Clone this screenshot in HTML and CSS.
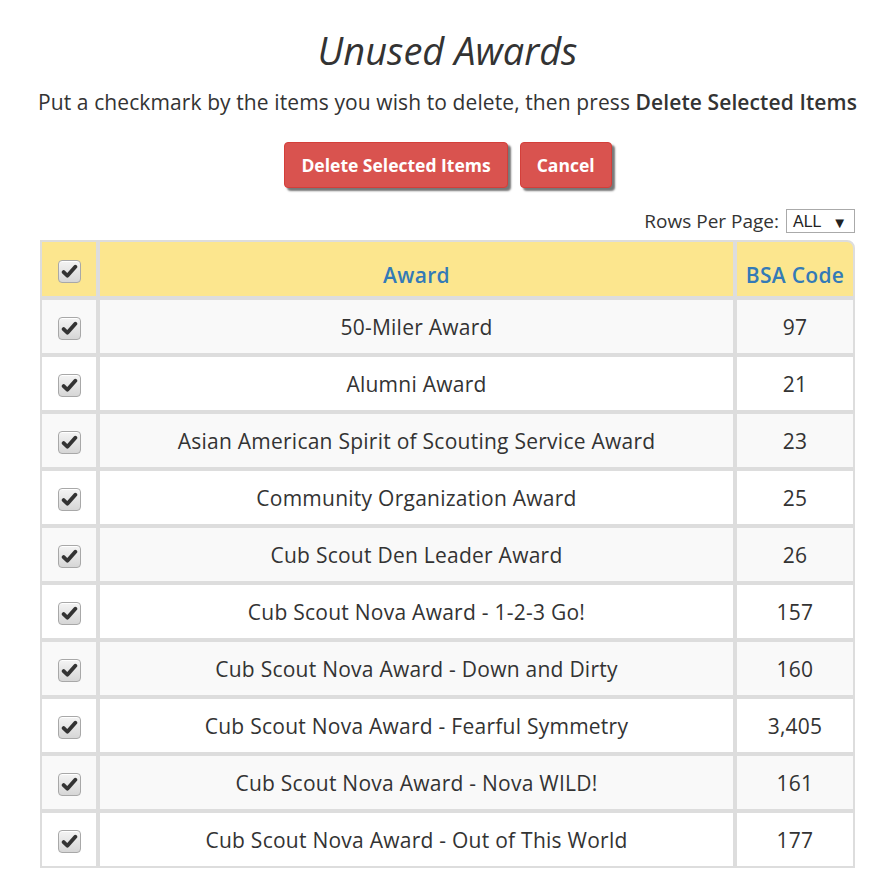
FILE: index.html
```html
<!DOCTYPE html>
<html>
<head>
<meta charset="utf-8">
<link rel="stylesheet" href="styles.css">
</head>
<body>
<div class="page">
  <h1 class="title">Unused Awards</h1>
  <p class="intro">Put a checkmark by the items you wish to delete, then press <b>Delete Selected Items</b></p>
  <div class="actions">
    <button class="btn">Delete Selected Items</button>
    <button class="btn">Cancel</button>
  </div>
  <div class="pager">
    <span class="pager-label">Rows Per Page:</span>
    <span class="select">ALL <span class="arrow">▼</span></span>
  </div>
  <table class="grid">
    <thead>
      <tr>
        <th class="c-check"><span class="cb"><svg viewBox="0 0 16 16"><path d="M2.5 8.5 L6 12 L13.5 3.5" /></svg></span></th>
        <th class="c-award">Award</th>
        <th class="c-code">BSA Code</th>
      </tr>
    </thead>
    <tbody>
      <tr><td class="c-check"><span class="cb"><svg viewBox="0 0 16 16"><path d="M2.5 8.5 L6 12 L13.5 3.5" /></svg></span></td><td>50-Miler Award</td><td class="c-code">97</td></tr>
      <tr><td class="c-check"><span class="cb"><svg viewBox="0 0 16 16"><path d="M2.5 8.5 L6 12 L13.5 3.5" /></svg></span></td><td>Alumni Award</td><td class="c-code">21</td></tr>
      <tr><td class="c-check"><span class="cb"><svg viewBox="0 0 16 16"><path d="M2.5 8.5 L6 12 L13.5 3.5" /></svg></span></td><td>Asian American Spirit of Scouting Service Award</td><td class="c-code">23</td></tr>
      <tr><td class="c-check"><span class="cb"><svg viewBox="0 0 16 16"><path d="M2.5 8.5 L6 12 L13.5 3.5" /></svg></span></td><td>Community Organization Award</td><td class="c-code">25</td></tr>
      <tr><td class="c-check"><span class="cb"><svg viewBox="0 0 16 16"><path d="M2.5 8.5 L6 12 L13.5 3.5" /></svg></span></td><td>Cub Scout Den Leader Award</td><td class="c-code">26</td></tr>
      <tr><td class="c-check"><span class="cb"><svg viewBox="0 0 16 16"><path d="M2.5 8.5 L6 12 L13.5 3.5" /></svg></span></td><td>Cub Scout Nova Award - 1-2-3 Go!</td><td class="c-code">157</td></tr>
      <tr><td class="c-check"><span class="cb"><svg viewBox="0 0 16 16"><path d="M2.5 8.5 L6 12 L13.5 3.5" /></svg></span></td><td>Cub Scout Nova Award - Down and Dirty</td><td class="c-code">160</td></tr>
      <tr><td class="c-check"><span class="cb"><svg viewBox="0 0 16 16"><path d="M2.5 8.5 L6 12 L13.5 3.5" /></svg></span></td><td>Cub Scout Nova Award - Fearful Symmetry</td><td class="c-code">3,405</td></tr>
      <tr><td class="c-check"><span class="cb"><svg viewBox="0 0 16 16"><path d="M2.5 8.5 L6 12 L13.5 3.5" /></svg></span></td><td>Cub Scout Nova Award - Nova WILD!</td><td class="c-code">161</td></tr>
      <tr><td class="c-check"><span class="cb"><svg viewBox="0 0 16 16"><path d="M2.5 8.5 L6 12 L13.5 3.5" /></svg></span></td><td>Cub Scout Nova Award - Out of This World</td><td class="c-code">177</td></tr>
    </tbody>
  </table>
</div>
</body>
</html>
```

FILE: styles.css
```css
html, body {
  margin: 0;
  padding: 0;
  background: #fff;
}
body {
  font-family: "Open Sans", "Noto Sans", sans-serif;
  color: #333;
}
.page {
  padding: 0 35px 0 40px;
}
.title {
  margin: 0;
  padding-top: 27px;
  height: 46px;
  text-align: center;
  font-size: 38px;
  font-weight: 400;
  font-style: italic;
  line-height: 46px;
}
.intro {
  margin: 16px -20px 0 -20px;
  text-align: center;
  font-size: 21px;
  letter-spacing: 0.1px;
  line-height: 26px;
}
.intro b {
  font-weight: 600;
}
.actions {
  display: flex;
  justify-content: center;
  gap: 12px;
  margin-top: 27px;
  padding-left: 1px;
}
.btn {
  font-family: inherit;
  font-size: 17.5px;
  font-weight: 700;
  color: #fff;
  background: #d9534f;
  border: 1px solid #d43f3a;
  border-radius: 4px;
  height: 46px;
  padding: 0 16px;
  box-shadow: 3px 3px 2px #777;
}
.pager {
  display: flex;
  justify-content: flex-end;
  align-items: center;
  gap: 7px;
  margin-top: 21px;
  height: 24px;
}
.pager-label {
  font-size: 19px;
}
.select {
  display: inline-flex;
  align-items: center;
  justify-content: space-between;
  box-sizing: border-box;
  width: 69px;
  height: 24px;
  border: 1px solid #aaa;
  padding: 2px 7px 0 6px;
  font-family: "Liberation Sans", Arial, sans-serif;
  font-size: 16px;
  color: #222;
}
.arrow {
  font-size: 15px;
}
.grid {
  margin-top: 7px;
  width: 815px;
  border-collapse: separate;
  border-spacing: 0;
  border-top-right-radius: 8px;
}
.grid th, .grid td {
  box-sizing: border-box;
  border: 2px solid #ddd;
  text-align: center;
  padding: 0;
}
.grid th {
  background: #fce68e;
  color: #337ab7;
  font-size: 21px;
  letter-spacing: 0.3px;
  font-weight: 600;
  height: 58px;
  vertical-align: bottom;
  padding-bottom: 7px;
}
.grid th.c-check {
  vertical-align: middle;
  padding-bottom: 0;
}
.grid th.c-code {
  border-top-right-radius: 8px;
}
.grid td {
  height: 57px;
  font-size: 21px;
  letter-spacing: 0.25px;
  color: #333;
}
.grid tbody tr:nth-child(odd) td {
  background: #f9f9f9;
}
.grid tbody tr:nth-child(even) td {
  background: #fff;
}
.grid .c-check {
  width: 58px;
}
.grid .c-code {
  width: 120px;
}
.cb {
  display: inline-flex;
  align-items: center;
  justify-content: center;
  box-sizing: border-box;
  width: 23px;
  height: 23px;
  border: 1px solid #a8a8a8;
  border-radius: 4px;
  background: linear-gradient(#f4f4f4, #d6d6d6);
  box-shadow: inset 0 1px 0 #fff;
  vertical-align: middle;
}
.cb svg {
  width: 17px;
  height: 17px;
}
.cb path {
  fill: none;
  stroke: #333;
  stroke-width: 3.6;
  stroke-linecap: round;
  stroke-linejoin: round;
}
```
